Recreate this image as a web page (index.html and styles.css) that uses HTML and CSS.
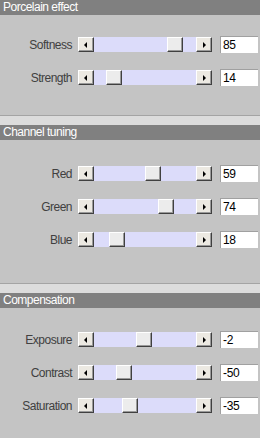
FILE: index.html
```html
<!DOCTYPE html>
<html>
<head>
<meta charset="utf-8">
<link rel="stylesheet" href="styles.css">
</head>
<body>
<div class="panel">
  <section class="group">
    <div class="group-title">Porcelain effect</div>
    <div class="group-body body-1">
      <div class="row">
        <span class="label">Softness</span>
        <div class="slider">
          <span class="btn"><span class="arrow-left"></span></span>
          <span class="track"><span class="thumb" style="--p: 0.85"></span></span>
          <span class="btn"><span class="arrow-right"></span></span>
        </div>
        <span class="value">85</span>
      </div>
      <div class="row">
        <span class="label">Strength</span>
        <div class="slider">
          <span class="btn"><span class="arrow-left"></span></span>
          <span class="track"><span class="thumb" style="--p: 0.14"></span></span>
          <span class="btn"><span class="arrow-right"></span></span>
        </div>
        <span class="value">14</span>
      </div>
    </div>
  </section>
  <section class="group">
    <div class="group-title">Channel tuning</div>
    <div class="group-body body-2">
      <div class="row">
        <span class="label">Red</span>
        <div class="slider">
          <span class="btn"><span class="arrow-left"></span></span>
          <span class="track"><span class="thumb" style="--p: 0.59"></span></span>
          <span class="btn"><span class="arrow-right"></span></span>
        </div>
        <span class="value">59</span>
      </div>
      <div class="row">
        <span class="label">Green</span>
        <div class="slider">
          <span class="btn"><span class="arrow-left"></span></span>
          <span class="track"><span class="thumb" style="--p: 0.74"></span></span>
          <span class="btn"><span class="arrow-right"></span></span>
        </div>
        <span class="value">74</span>
      </div>
      <div class="row">
        <span class="label">Blue</span>
        <div class="slider">
          <span class="btn"><span class="arrow-left"></span></span>
          <span class="track"><span class="thumb" style="--p: 0.18"></span></span>
          <span class="btn"><span class="arrow-right"></span></span>
        </div>
        <span class="value">18</span>
      </div>
    </div>
  </section>
  <section class="group">
    <div class="group-title">Compensation</div>
    <div class="group-body body-3">
      <div class="row">
        <span class="label">Exposure</span>
        <div class="slider">
          <span class="btn"><span class="arrow-left"></span></span>
          <span class="track"><span class="thumb" style="--p: 0.49"></span></span>
          <span class="btn"><span class="arrow-right"></span></span>
        </div>
        <span class="value">-2</span>
      </div>
      <div class="row">
        <span class="label">Contrast</span>
        <div class="slider">
          <span class="btn"><span class="arrow-left"></span></span>
          <span class="track"><span class="thumb" style="--p: 0.25"></span></span>
          <span class="btn"><span class="arrow-right"></span></span>
        </div>
        <span class="value">-50</span>
      </div>
      <div class="row">
        <span class="label">Saturation</span>
        <div class="slider">
          <span class="btn"><span class="arrow-left"></span></span>
          <span class="track"><span class="thumb" style="--p: 0.325"></span></span>
          <span class="btn"><span class="arrow-right"></span></span>
        </div>
        <span class="value">-35</span>
      </div>
    </div>
  </section>
</div>
</body>
</html>
```
FILE: styles.css
```css
html, body {
  margin: 0;
  padding: 0;
  background: #c4c4c4;
}
body {
  width: 260px;
  height: 438px;
  overflow: hidden;
  font-family: "Liberation Sans", Arial, sans-serif;
}
.panel {
  display: flex;
  flex-direction: column;
}
.group + .group {
  border-top: 1px solid #a4a4a4;
  padding-top: 9px;
  background: #dcdcdc;
}
.group-title {
  height: 15px;
  line-height: 15px;
  background: #808080;
  color: #ffffff;
  font-size: 12px;
  letter-spacing: -0.5px;
  padding-left: 3px;
}
.group-body {
  display: flex;
  flex-direction: column;
  gap: 18px;
  box-sizing: border-box;
  background: #c4c4c4;
}
.body-1 { height: 100px; padding-top: 22px; }
.body-2 { height: 143px; padding-top: 26px; }
.body-3 { height: 131px; padding-top: 24px; }
.row {
  display: flex;
  align-items: center;
  height: 15px;
}
.label {
  width: 72px;
  flex: none;
  text-align: right;
  font-size: 12px;
  letter-spacing: -0.5px;
  color: #404040;
  white-space: nowrap;
}
.slider {
  display: flex;
  width: 134px;
  height: 15px;
  margin-left: 6px;
  flex: none;
}
.btn {
  width: 16px;
  height: 15px;
  box-sizing: border-box;
  background: #ece9e2;
  border-top: 1px solid #ffffff;
  border-left: 1px solid #ffffff;
  border-right: 1px solid #404040;
  border-bottom: 1px solid #404040;
  box-shadow: inset -1px -1px 0 #9a9a9a;
  display: flex;
  align-items: center;
  justify-content: center;
  flex: none;
}
.arrow-left {
  width: 0;
  height: 0;
  border-top: 3px solid transparent;
  border-bottom: 3px solid transparent;
  border-right: 3px solid #000;
  margin-left: -2px;
}
.arrow-right {
  width: 0;
  height: 0;
  border-top: 3px solid transparent;
  border-bottom: 3px solid transparent;
  border-left: 3px solid #000;
  margin-left: 1px;
}
.track {
  flex: 1;
  position: relative;
  background: #dcdcfa;
}
.thumb {
  position: absolute;
  top: 0;
  left: calc(var(--p) * (100% - 16px));
  width: 16px;
  height: 15px;
  box-sizing: border-box;
  background: #ececec;
  border-top: 1px solid #ffffff;
  border-left: 1px solid #ffffff;
  border-right: 1px solid #404040;
  border-bottom: 1px solid #404040;
  box-shadow: inset -1px -1px 0 #9a9a9a;
}
.value {
  box-sizing: border-box;
  width: 38px;
  height: 17px;
  margin-left: 8px;
  flex: none;
  background: #ffffff;
  border-top: 1px solid #a0a0a0;
  border-left: 1px solid #a0a0a0;
  font-size: 12px;
  line-height: 16px;
  padding-left: 2px;
  color: #000000;
  letter-spacing: -0.3px;
}
```
